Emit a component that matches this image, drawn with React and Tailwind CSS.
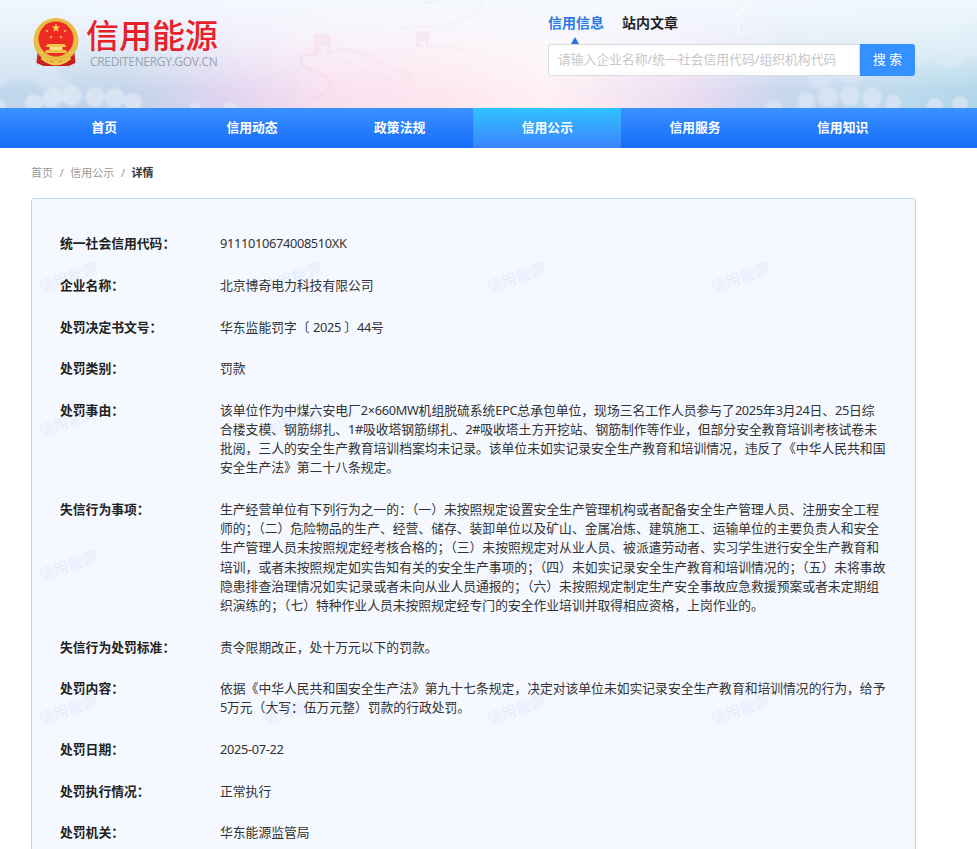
import React from "react";

const font = "font-['Noto_Sans','Noto_Sans_CJK_SC',sans-serif]";

const navItems = ["首页", "信用动态", "政策法规", "信用公示", "信用服务", "信用知识"];

const rows = [
  { label: "统一社会信用代码：", value: "9111010674008510XK" },
  { label: "企业名称：", value: "北京博奇电力科技有限公司" },
  { label: "处罚决定书文号：", value: "华东监能罚字〔 2025 〕44号" },
  { label: "处罚类别：", value: "罚款" },
  {
    label: "处罚事由：",
    value:
      "该单位作为中煤六安电厂2×660MW机组脱硫系统EPC总承包单位，现场三名工作人员参与了2025年3月24日、25日综合楼支模、钢筋绑扎、1#吸收塔钢筋绑扎、2#吸收塔土方开挖站、钢筋制作等作业，但部分安全教育培训考核试卷未批阅，三人的安全生产教育培训档案均未记录。该单位未如实记录安全生产教育和培训情况，违反了《中华人民共和国安全生产法》第二十八条规定。",
  },
  {
    label: "失信行为事项：",
    value:
      "生产经营单位有下列行为之一的：（一）未按照规定设置安全生产管理机构或者配备安全生产管理人员、注册安全工程师的；（二）危险物品的生产、经营、储存、装卸单位以及矿山、金属冶炼、建筑施工、运输单位的主要负责人和安全生产管理人员未按照规定经考核合格的；（三）未按照规定对从业人员、被派遣劳动者、实习学生进行安全生产教育和培训，或者未按照规定如实告知有关的安全生产事项的；（四）未如实记录安全生产教育和培训情况的；（五）未将事故隐患排查治理情况如实记录或者未向从业人员通报的；（六）未按照规定制定生产安全事故应急救援预案或者未定期组织演练的；（七）特种作业人员未按照规定经专门的安全作业培训并取得相应资格，上岗作业的。",
  },
  { label: "失信行为处罚标准：", value: "责令限期改正，处十万元以下的罚款。" },
  {
    label: "处罚内容：",
    value:
      "依据《中华人民共和国安全生产法》第九十七条规定，决定对该单位未如实记录安全生产教育和培训情况的行为，给予5万元（大写：伍万元整）罚款的行政处罚。",
  },
  { label: "处罚日期：", value: "2025-07-22" },
  { label: "处罚执行情况：", value: "正常执行" },
  { label: "处罚机关：", value: "华东能源监管局" },
];

// latin runs come out wider than in the reference, so pull them in a bit
function Value({ text }) {
  return text.split(/([0-9A-Za-z#×-]+)/).map((part, i) =>
    i % 2 ? (
      <span key={i} className="tracking-[-0.33px]">
        {part}
      </span>
    ) : (
      part
    )
  );
}

function Cloud({ circles, fill }) {
  return (
    <g fill={fill}>
      {circles.map(([cx, cy, r]) => (
        <circle key={`${cx}-${cy}`} cx={cx} cy={cy} r={r} />
      ))}
    </g>
  );
}

function HeaderBackground() {
  return (
    <svg className="absolute inset-0 h-full w-full" viewBox="0 0 977 108" preserveAspectRatio="none">
      <defs>
        <linearGradient id="sky" x1="0" x2="1" y1="0" y2="0">
          <stop offset="0" stopColor="#bcd6ec" />
          <stop offset="0.13" stopColor="#c0d2ea" />
          <stop offset="0.24" stopColor="#e2d4f0" />
          <stop offset="0.33" stopColor="#f8dff0" />
          <stop offset="0.45" stopColor="#fde6ee" />
          <stop offset="0.56" stopColor="#fff0f3" />
          <stop offset="0.7" stopColor="#ecdcf2" />
          <stop offset="0.8" stopColor="#c6d5ee" />
          <stop offset="0.92" stopColor="#bad8ec" />
          <stop offset="1" stopColor="#aed6e8" />
        </linearGradient>
        <linearGradient id="top" x1="0" x2="0" y1="0" y2="1">
          <stop offset="0" stopColor="#f4faff" stopOpacity="0.95" />
          <stop offset="0.35" stopColor="#f8fbff" stopOpacity="0.7" />
          <stop offset="0.85" stopColor="#ffffff" stopOpacity="0.05" />
          <stop offset="1" stopColor="#ffffff" stopOpacity="0" />
        </linearGradient>
        <filter id="soft">
          <feGaussianBlur stdDeviation="1" />
        </filter>
        <filter id="softer">
          <feGaussianBlur stdDeviation="0.6" />
        </filter>
      </defs>
      <rect width="977" height="108" fill="url(#sky)" />
      <rect width="977" height="108" fill="url(#top)" />

      <g filter="url(#soft)" opacity="0.4">
        <Cloud
          fill="#e6eff8"
          circles={[
            [-8, 62, 26],
            [22, 66, 14],
            [46, 75, 13],
            [62, 90, 12],
          ]}
        />
        <Cloud
          fill="#e4eff8"
          circles={[
            [850, 62, 22],
            [885, 52, 17],
            [918, 52, 14],
            [950, 50, 18],
            [976, 40, 18],
            [820, 75, 14],
          ]}
        />
      </g>
      <g filter="url(#soft)" opacity="0.7">
        <Cloud
          fill="#e3ebf6"
          circles={[
            [34, 103, 9],
            [52, 98, 10],
            [72, 96, 10],
            [95, 97, 10],
            [115, 98, 10],
            [133, 102, 9],
            [0, 106, 6],
            [195, 108, 5],
            [230, 108, 6],
          ]}
        />
        <Cloud
          fill="#dfe8f6"
          circles={[
            [806, 101, 9],
            [828, 97, 10],
            [850, 96, 10],
            [872, 98, 10],
            [893, 103, 8],
            [935, 106, 8],
            [960, 104, 8],
            [774, 108, 8],
          ]}
        />
      </g>

      {/* great wall */}
      <g fill="none" filter="url(#softer)" opacity="0.42">
        <path d="M318 55 C300 52 296 62 306 68 C322 74 336 80 328 90 C322 98 305 100 296 108" stroke="#f7cfe2" strokeWidth="3" opacity="0.8" />
        <path d="M306 48 C292 56 290 70 298 80 C302 92 282 100 262 106" stroke="#ecd0e6" strokeWidth="5" strokeDasharray="1 1.6" opacity="0.7" />
        <path d="M333 52 C350 44 372 58 388 66 C398 72 408 74 414 78" stroke="#f6cbdf" strokeWidth="5" strokeDasharray="2 2" opacity="0.7" />
        <path d="M340 60 C360 68 375 78 392 80" stroke="#f3d4e4" strokeWidth="1" opacity="0.8" />
        <path d="M394 60 C404 52 415 46 424 46 C436 48 450 46 468 50" stroke="#f6d2e2" strokeWidth="3" strokeDasharray="2 2" opacity="0.7" />
        <path d="M400 28 C425 24 436 30 452 24 C470 18 482 8 484 0" stroke="#e8def0" strokeWidth="4" strokeDasharray="1.5 1.5" opacity="0.7" />
        <path d="M424 4 C440 0 445 -2 450 0" stroke="#e6e2f0" strokeWidth="2" opacity="0.7" />
        <path d="M264 84 L284 68" stroke="#ecd0e4" strokeWidth="1.5" opacity="0.8" />
      </g>
      <g fill="#f3d3e4" opacity="0.32" filter="url(#softer)">
        <path d="M313 34 h16 v2 h2 v18 h-4 v-8 h-6 v8 h-8 z" />
        <path d="M416 31 h12 v2 h1 v13 h-3 v-5 h-5 v5 h-5 z" />
      </g>

      {/* wind turbine */}
      <g stroke="#ffffff" strokeLinecap="round" opacity="0.55" fill="none" filter="url(#softer)">
        <path d="M739 14 L738 35" strokeWidth="1.6" />
        <path d="M739 14 L750 0" strokeWidth="1.8" />
        <path d="M739 14 L722 3" strokeWidth="1.2" />
        <path d="M739 14 L752 34" strokeWidth="1.2" />
      </g>
    </svg>
  );
}

function Emblem() {
  const stars = [
    [55.5, 28, 4.5],
    [46.5, 31, 1.8],
    [64.5, 31, 1.8],
    [50.5, 37, 1.8],
    [60.5, 37, 1.8],
  ];
  const starPath = (cx, cy, r) =>
    Array.from({ length: 10 }, (_, i) => {
      const a = -Math.PI / 2 + (i * Math.PI) / 5;
      const rad = i % 2 ? r * 0.42 : r;
      return `${(cx + rad * Math.cos(a)).toFixed(2)},${(cy + rad * Math.sin(a)).toFixed(2)}`;
    }).join(" ");

  return (
    <svg className="h-[50px] w-[48px] shrink-0" viewBox="32 17 47 50">
      <circle cx="55.5" cy="40.5" r="22.5" fill="#e9bd45" />
      <circle cx="55.5" cy="39" r="17.5" fill="#ee2a24" />
      {stars.map(([x, y, r]) => (
        <polygon key={`${x}-${y}`} points={starPath(x, y, r)} fill="#f6cf4f" />
      ))}
      <path d="M47 44 h17 l2 3 h-21 z" fill="#f3c64a" />
      <rect x="49" y="47" width="13" height="3" fill="#fbe08a" />
      <rect x="45" y="50" width="21" height="3" fill="#f0c348" />
      <path d="M37 53 C42 60 48 62 55.5 62 C63 62 69 60 74 53 L75 63 L68 66 H43 L36 63 Z" fill="#c8201f" />
      <path d="M41 58 C47 63 51 64 55.5 64 C60 64 64 63 70 58" fill="none" stroke="#f2c84e" strokeWidth="2.4" />
      <circle cx="55.5" cy="63" r="2.2" fill="#f2c84e" />
    </svg>
  );
}

function Header() {
  return (
    <header className="relative h-[108px] overflow-hidden">
      <HeaderBackground />
      <div className="relative flex h-full">
        <div className="ml-[32px] mt-[17px] flex h-[50px] items-start">
          <Emblem />
          <div className="ml-[7px]">
            <div className="ml-[-1px] h-[37px] text-[33px] leading-[38px] font-medium text-[#e8202a]">信用能源</div>
            <div className="ml-[3px] mt-[-1px] text-[12px] leading-[18px] tracking-[-0.33px] text-[#98a2ab] font-['Open_Sans',sans-serif]">
              CREDITENERGY.GOV.CN
            </div>
          </div>
        </div>
        <div className="absolute left-[548px] top-[13px] w-[367px]">
          <div className="flex h-[20px] items-center gap-[18px] text-[14px] leading-[20px] font-bold">
            <span className="text-[#2a7ae6]">信用信息</span>
            <span className="text-[#222222]">站内文章</span>
          </div>
          <div className="ml-[23px] mt-[4px] h-0 w-0 border-x-[4px] border-b-[7px] border-x-transparent border-b-[#1f74e0]" />
          <div className="flex h-[32px]">
            <div className="flex flex-1 items-center rounded-l-[3px] border border-[#dcdcdf] bg-white pl-[9px] text-[12.8px] text-[#c8c8c8]">
              请输入企业名称/统一社会信用代码/组织机构代码
            </div>
            <button className="w-[55px] rounded-r-[3px] bg-[#3491ff] text-[12.8px] text-white">搜 索</button>
          </div>
        </div>
      </div>
    </header>
  );
}

function Nav() {
  return (
    <nav className="h-[40px] bg-linear-to-b from-[#3a91ff] to-[#146cf8] pl-[30px]">
      <ul className="grid h-full w-[886px] grid-cols-6">
        {navItems.map((item) => (
          <li
            key={item}
            className={`flex items-center justify-center pl-[1px] text-[12.8px] font-bold text-white ${
              item === "信用公示" ? "bg-linear-to-b from-[#30c2ff] to-[#3b82ff]" : ""
            }`}
          >
            {item}
          </li>
        ))}
      </ul>
    </nav>
  );
}

function Watermarks() {
  return (
    <div className="pointer-events-none absolute top-[6px] left-[-76px] grid grid-cols-[repeat(4,224px)] auto-rows-[144px]">
      {Array.from({ length: 16 }, (_, i) => (
        <div key={i} className="flex items-center justify-center">
          <span className="-rotate-20 text-[15px] text-[#e4ecfb]">信用能源</span>
        </div>
      ))}
    </div>
  );
}

export default function App() {
  return (
    <div className={`h-[849px] overflow-hidden bg-white ${font}`}>
      <Header />
      <Nav />
      <div className="flex h-[50px] items-center gap-[6.6px] pt-[1px] pl-[31px] text-[11px] text-[#999999]">
        <span>首页</span>
        <span>/</span>
        <span>信用公示</span>
        <span>/</span>
        <span className="font-bold text-[#333333]">详情</span>
      </div>
      <section className="relative ml-[31px] w-[885px] overflow-hidden rounded-[3px] border border-[#c3d3ec] bg-[#f5f8ff] pt-[35.4px] pb-[60px] pl-[28px]">
        <Watermarks />
        <div className="relative text-[12.8px] leading-[19.2px]">
          {rows.map((row) => (
            <div key={row.label} className="mb-[22.4px] flex">
              <div className="w-[160px] shrink-0 font-bold text-[#222222]">{row.label}</div>
              <div className="w-[667px] text-[#333333]">
                <Value text={row.value} />
              </div>
            </div>
          ))}
        </div>
      </section>
    </div>
  );
}
